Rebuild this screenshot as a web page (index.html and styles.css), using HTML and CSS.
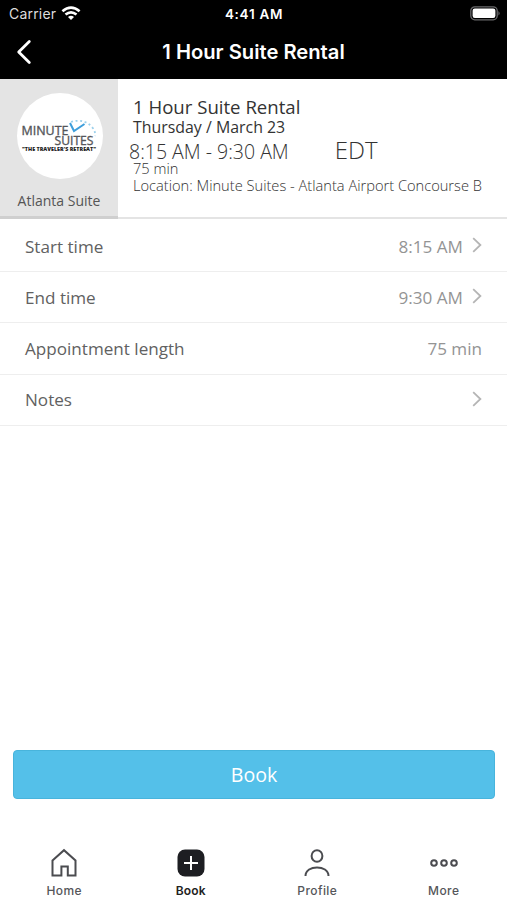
FILE: index.html
```html
<!DOCTYPE html>
<html lang="en">
<head>
<meta charset="utf-8">
<title>1 Hour Suite Rental</title>
<link rel="stylesheet" href="styles.css">
</head>
<body>
<div class="app">
  <header class="top">
    <div class="status">
      <div class="carrier"><span>Carrier</span>
        <svg class="wifi" width="20" height="15" viewBox="0 0 20 15"><g fill="none" stroke="#fff" stroke-width="2.6"><path d="M1.4 5.2Q10-2 18.6 5.2"/><path d="M4.5 8.6Q10 4 15.5 8.6"/></g><path d="M7 11Q10 8.7 13 11L10 14Z" fill="#fff"/></svg>
      </div>
      <span class="clock">4:41 AM</span>
      <svg class="battery" width="31" height="15" viewBox="0 0 31 15"><rect x=".8" y=".8" width="26.4" height="13" rx="4" fill="none" stroke="#69696b" stroke-width="1.3"/><rect x="2.6" y="2.6" width="22.8" height="9.4" rx="2.2" fill="#fff"/><path d="M28.5 5Q30.7 7.3 28.5 9.6Z" fill="#77777a"/></svg>
    </div>
    <div class="nav">
      <svg class="back" width="16" height="26" viewBox="0 0 16 26"><path d="M13.3 2.4 2.7 13 13.3 23.6" fill="none" stroke="#fff" stroke-width="2.8" stroke-linecap="round" stroke-linejoin="round"/></svg>
      <h1>1 Hour Suite Rental</h1>
    </div>
  </header>

  <section class="summary">
    <div class="provider">
      <svg class="logo" width="86" height="86" viewBox="0 0 86 86">
        <circle cx="43" cy="43" r="43" fill="#fff"/>
        <path d="M54 29Q67 25 75 34Q79 39 78 43" fill="none" stroke="#9bd0ec" stroke-width="1.8" stroke-dasharray="2 2.6"/>
        <path d="M53 30 57 38 67.5 31" fill="none" stroke="#3e9edb" stroke-width="2"/>
        <g font-family="Open Sans, sans-serif" fill="#55565a" stroke="#55565a" stroke-width=".35">
          <text x="4.5" y="42.3" font-size="12.6" textLength="47" lengthAdjust="spacingAndGlyphs">MINUTE</text>
          <text x="37.5" y="51.8" font-size="12.6" textLength="39" lengthAdjust="spacingAndGlyphs">SUITES</text>
        </g>
        <text x="5" y="57.7" font-family="Open Sans, sans-serif" font-weight="800" font-size="4.8" fill="#222" textLength="74" lengthAdjust="spacingAndGlyphs">"THE TRAVELER'S RETREAT"</text>
      </svg>
      <span class="suite">Atlanta Suite</span>
    </div>
    <div class="details">
      <h2>1 Hour Suite Rental</h2>
      <p class="date">Thursday / March 23</p>
      <div class="times"><span class="range">8:15 AM - 9:30 AM</span><span class="zone">EDT</span></div>
      <p class="length">75 min</p>
      <p class="location">Location: Minute Suites - Atlanta Airport Concourse B</p>
    </div>
  </section>

  <main>
    <div class="row"><span class="label">Start time</span><span class="value">8:15 AM</span><svg class="chev" width="10" height="16" viewBox="0 0 10 16"><path d="M1.2 1.2 8.4 8 1.2 14.8"/></svg></div>
    <div class="row"><span class="label">End time</span><span class="value">9:30 AM</span><svg class="chev" width="10" height="16" viewBox="0 0 10 16"><path d="M1.2 1.2 8.4 8 1.2 14.8"/></svg></div>
    <div class="row"><span class="label">Appointment length</span><span class="value">75 min</span></div>
    <div class="row"><span class="label">Notes</span><svg class="chev" width="10" height="16" viewBox="0 0 10 16"><path d="M1.2 1.2 8.4 8 1.2 14.8"/></svg></div>
  </main>

  <button class="book">Book</button>

  <nav class="tabs">
    <div class="tab"><svg width="30" height="30" viewBox="0 0 30 30"><path d="M3.5 12.5 15 2.2 26.5 12.5V27.5H18.8V18.5H12.4V27.5H3.5Z"/></svg><span>Home</span></div>
    <div class="tab active"><svg width="30" height="30" viewBox="0 0 30 30"><rect x="1.5" y="1.5" width="27" height="27" rx="7.5" class="solid"/><path d="M15 8V22M8 15H22" class="plus"/></svg><span>Book</span></div>
    <div class="tab"><svg width="30" height="30" viewBox="0 0 30 30"><ellipse cx="15" cy="8" rx="5.4" ry="5.8"/><path d="M3.5 28C3.5 16.5 26.5 16.5 26.5 28"/></svg><span>Profile</span></div>
    <div class="tab"><svg width="30" height="30" viewBox="0 0 30 30"><circle cx="5" cy="15" r="2.8"/><circle cx="15" cy="15" r="2.8"/><circle cx="25" cy="15" r="2.8"/></svg><span>More</span></div>
  </nav>
</div>
</body>
</html>
```
FILE: styles.css
```css
* { box-sizing: border-box; margin: 0; padding: 0; }
body { background: #fff; font-family: "Open Sans", sans-serif; }
.app { width: 507px; height: 900px; display: flex; flex-direction: column; overflow: hidden; }
svg { display: block; flex: none; }

.top { height: 79px; flex: none; background: #000; color: #fff; font-family: Inter, sans-serif; }
.status { height: 27px; display: grid; grid-template-columns: 1fr auto 1fr; align-items: center; padding: 0 6px 0 9px; }
.carrier { display: flex; align-items: center; gap: 5px; font-size: 14px; letter-spacing: .2px; color: #ddd; }
.clock { font-size: 13.5px; font-weight: 600; letter-spacing: .7px; margin-left: -2px; }
.battery { justify-self: end; }
.nav { height: 50px; display: grid; grid-template-columns: 16px 1fr 16px; align-items: center; padding: 0 16px; }
.nav h1 { font-size: 20.2px; line-height: 24px; font-weight: 600; text-align: center; }

.summary { height: 140px; flex: none; display: flex; border-bottom: 2px solid #e4e4e4; }
.provider { width: 118px; height: 140px; background: #e4e4e4; border-bottom: 3px solid #cfcfcf; display: flex; flex-direction: column; align-items: center; padding-top: 14px; }
.logo { margin-left: 1px; }
.suite { margin-top: 12px; font-size: 14px; line-height: 20px; color: #555; }
.details { padding: 16px 0 0 15px; white-space: nowrap; }
.details h2 { font-size: 18.6px; line-height: 24px; font-weight: 400; color: #333; }
.date { font-size: 15.9px; line-height: 16px; color: #333; }
.times { display: flex; align-items: center; height: 28px; margin: 2px 0 0 -4px; gap: 46px; font-weight: 300; color: #333; }
.range { font-size: 19.5px; }
.zone { font-size: 24px; line-height: 26px; margin-top: -2px; }
.length, .location { font-size: 14.65px; line-height: 17px; font-weight: 300; color: #333; }
.length { line-height: 16px; margin-top: -5px; }
.location { margin-top: 1px; }

main { padding-top: 2px; }
.row { height: 51.2px; display: flex; align-items: center; padding: 0 25px; border-bottom: 1.5px solid #eee; font-size: 17.1px; }
.label { margin-right: auto; color: #616161; }
.value { color: #949494; }
.chev { margin-left: 9px; margin-bottom: 2px; fill: none; stroke: #b5b5b5; stroke-width: 1.8; }

.book { margin: auto 12px 0 13px; height: 49px; flex: none; border: 1px solid #48b4dc; border-radius: 4px; background: #54c0e9; color: #fff; font: 400 19.6px/24px "Open Sans", sans-serif; }
.tabs { height: 101px; flex: none; display: grid; grid-template-columns: repeat(4, 1fr); padding: 49px 0 0 1px; }
.tab { display: flex; flex-direction: column; align-items: center; color: #55565a; font: 500 12px/16px Inter, sans-serif; letter-spacing: .4px; }
.tab span { margin-top: 5px; }
.tab svg { fill: none; stroke: #4b4c50; stroke-width: 2; }
.tab .solid { fill: #1d1e22; stroke: none; }
.tab .plus { stroke: #fff; }
.active { font-weight: 600; color: #222; letter-spacing: .1px; }
```
